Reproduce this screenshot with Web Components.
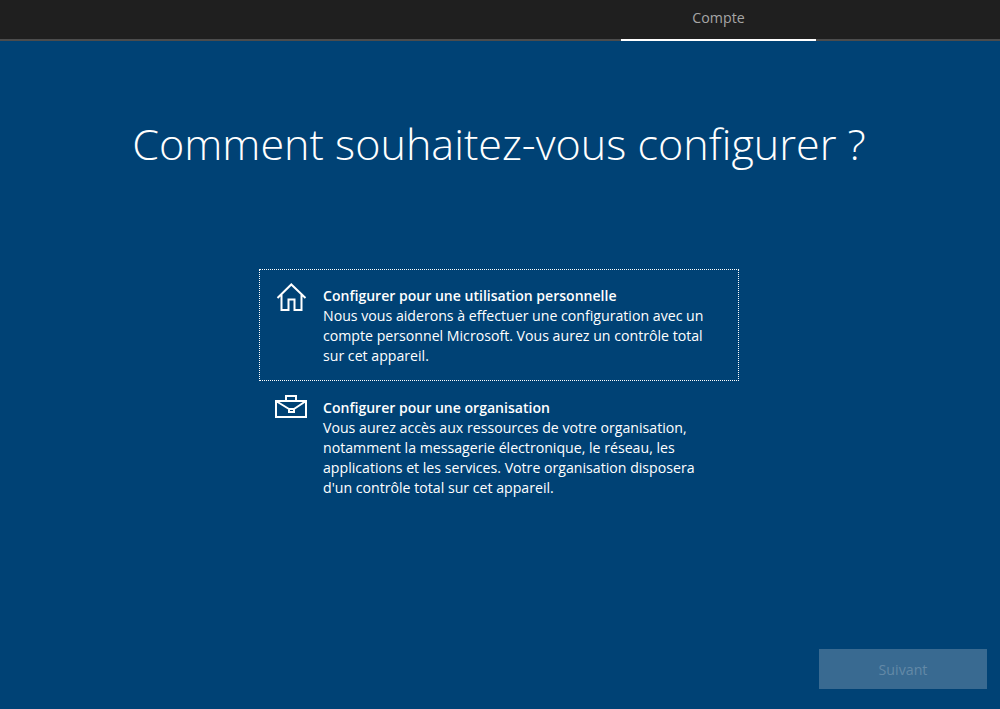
<!DOCTYPE html>
<html lang="fr">
<head>
<meta charset="utf-8">
<title>Compte</title>
<style>
  html, body { margin: 0; height: 100%; background: #004275; }
  body { font-family: "Open Sans", "Noto Sans", sans-serif; color: #fff; overflow: hidden; }
</style>
</head>
<body>
<oobe-page>
  <oobe-header slot="header"><oobe-tab>Compte</oobe-tab></oobe-header>
  <oobe-title slot="title">Comment souhaitez-vous configurer ?</oobe-title>
  <oobe-option selected heading="Configurer pour une utilisation personnelle" icon="home">Nous vous aiderons à effectuer une configuration avec un<br>compte personnel Microsoft. Vous aurez un contrôle total<br>sur cet appareil.</oobe-option>
  <oobe-option heading="Configurer pour une organisation" icon="work">Vous aurez accès aux ressources de votre organisation,<br>notamment la messagerie électronique, le réseau, les<br>applications et les services. Votre organisation disposera<br>d'un contrôle total sur cet appareil.</oobe-option>
  <oobe-next slot="footer">Suivant</oobe-next>
</oobe-page>

<script>
class OobePage extends HTMLElement {
  constructor() {
    super();
    this.attachShadow({ mode: 'open' })
    this.shadowRoot.innerHTML = `
      <style>
        :host { display: flex; flex-direction: column; height: 709px; }
        main { flex: 1; display: flex; flex-direction: column; align-items: center; }
        .options { width: 480px; margin: 94px 2px 0 0; }
        footer { display: flex; justify-content: flex-end; padding: 0 13px 20px 0; }
      </style>
      <slot name="header"></slot>
      <main>
        <slot name="title"></slot>
        <div class="options"><slot></slot></div>
      </main>
      <footer><slot name="footer"></slot></footer>
    `
  }
}

class OobeHeader extends HTMLElement {
  constructor() {
    super();
    this.attachShadow({ mode: 'open' })
    this.shadowRoot.innerHTML = `
      <style>
        :host { display: flex; height: 39px; padding-left: 621px; background: #1f1f1f; border-bottom: 2px solid #4c4c4c; }
      </style>
      <slot></slot>
    `
  }
}

class OobeTab extends HTMLElement {
  constructor() {
    super();
    this.attachShadow({ mode: 'open' })
    this.shadowRoot.innerHTML = `
      <style>
        :host { display: block; box-sizing: border-box; width: 195px; height: 41px; padding-top: 8px; border-bottom: 2px solid #fff; text-align: center; font-size: 14.2px; line-height: 20px; color: #a6a6a6; }
      </style>
      <slot></slot>
    `
  }
}

class OobeTitle extends HTMLElement {
  constructor() {
    super();
    this.attachShadow({ mode: 'open' })
    this.shadowRoot.innerHTML = `
      <style>
        :host { display: block; margin-top: 72px; margin-right: 2px; font-size: 43.1px; font-weight: 300; line-height: 62px; white-space: nowrap; }
      </style>
      <slot></slot>
    `
  }
}

const icons = {
  home: `<path d="M2.500 15 16.300 1.500 30.500 15M6.500 11v16h7V16.500h6V27h7V11"/>`,
  work: `<path d="M1 6h30v16H1zM1 6l13 8M31 6l-12 8M14 14h5v3h-5zM11 6V1h10v5"/>`
}

class OobeOption extends HTMLElement {
  constructor() {
    super();
    this.attachShadow({ mode: 'open' })
    this.shadowRoot.innerHTML = `
      <style>
        :host { display: flex; box-sizing: border-box; padding: 16px 0 14px 15px; border: 1px dotted transparent; }
        :host([selected]) { border-color: #fff; }
        .icon { width: 48px; flex: none; margin-top: -3px; }
        svg { display: block; fill: none; stroke: #fff; stroke-width: 2; }
        .text { font-size: 14.15px; line-height: 20px; white-space: nowrap; color: #fff; }
        h3 { margin: 0; font: inherit; font-size: 14.05px; font-weight: 600; }
      </style>
      <div class="icon"><svg width="33" height="30" viewBox="0 0 33 30"></svg></div>
      <div class="text"><h3></h3><slot></slot></div>
    `
  }

  connectedCallback() {
    this.shadowRoot.querySelector('h3').textContent = this.getAttribute('heading')
    this.shadowRoot.querySelector('svg').innerHTML = icons[this.getAttribute('icon')]
  }
}

class OobeNext extends HTMLElement {
  constructor() {
    super();
    this.attachShadow({ mode: 'open' })
    this.shadowRoot.innerHTML = `
      <style>
        :host { display: block; width: 168px; height: 40px; background: #396a91; color: #6389a7; font-size: 14.2px; line-height: 41px; text-align: center; }
      </style>
      <slot></slot>
    `
  }
}

customElements.define('oobe-page', OobePage)
customElements.define('oobe-header', OobeHeader)
customElements.define('oobe-tab', OobeTab)
customElements.define('oobe-title', OobeTitle)
customElements.define('oobe-option', OobeOption)
customElements.define('oobe-next', OobeNext)
</script>
</body>
</html>
